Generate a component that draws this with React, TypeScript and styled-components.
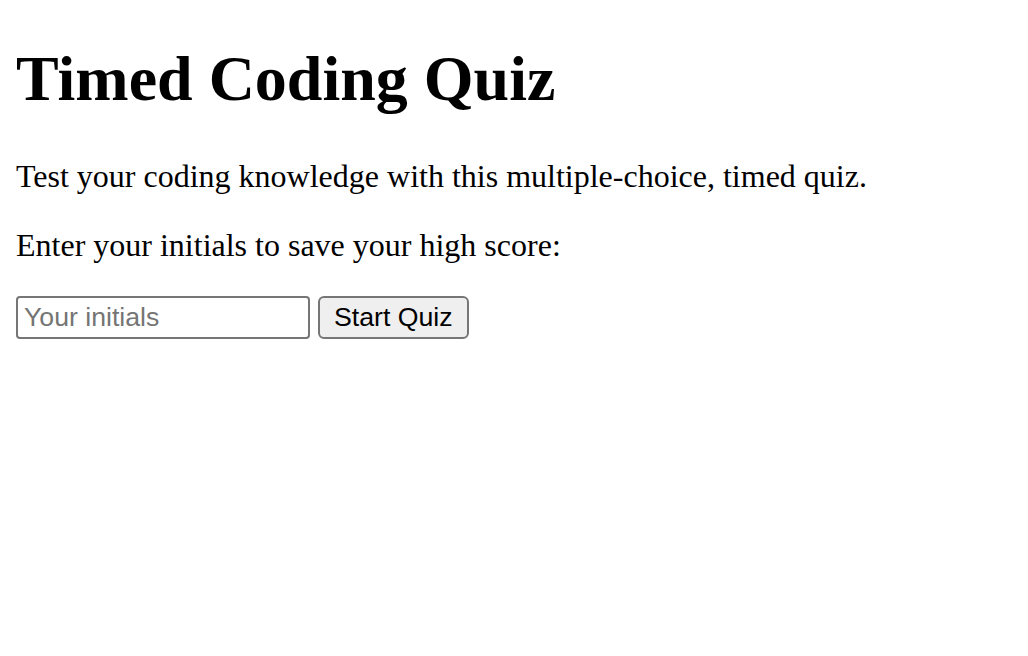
import React, { useState } from "react";
import styled, { createGlobalStyle } from "styled-components";

const GlobalStyle = createGlobalStyle`
  body {
    margin: 16px;
    font-family: "Liberation Serif", "Times New Roman", serif;
    color: #000;
    background: #fff;
  }
`;

const Title = styled.h1`
  font-size: 64px;
  font-weight: bold;
  line-height: 72px;
  margin: 27px 0 43px;
`;

const Text = styled.p`
  font-size: 32px;
  margin: 32px 0;
`;

const EntryRow = styled.div`
  display: flex;
  align-items: center;
  gap: 8px;
`;

const InitialsInput = styled.input`
  box-sizing: border-box;
  width: 294px;
  height: 43px;
  padding: 2px 6px;
  border: 2px solid #767676;
  border-radius: 4px;
  font-family: "Liberation Sans", Arial, sans-serif;
  font-size: 26.67px;
  color: #000;
  outline: none;

  &::placeholder {
    color: #757575;
  }
`;

const StartButton = styled.button`
  box-sizing: border-box;
  height: 43px;
  padding: 2px 14px;
  border: 2px solid #767676;
  border-radius: 6px;
  background: #efefef;
  font-family: "Liberation Sans", Arial, sans-serif;
  font-size: 26.67px;
  color: #000;
  cursor: pointer;
`;

export default function App() {
  const [initials, setInitials] = useState("");

  return (
    <>
      <GlobalStyle />
      <Title>Timed Coding Quiz</Title>
      <Text>Test your coding knowledge with this multiple-choice, timed quiz.</Text>
      <Text>Enter your initials to save your high score:</Text>
      <EntryRow>
        <InitialsInput
          type="text"
          placeholder="Your initials"
          value={initials}
          onChange={(e) => setInitials(e.target.value)}
        />
        <StartButton type="button">Start Quiz</StartButton>
      </EntryRow>
    </>
  );
}
